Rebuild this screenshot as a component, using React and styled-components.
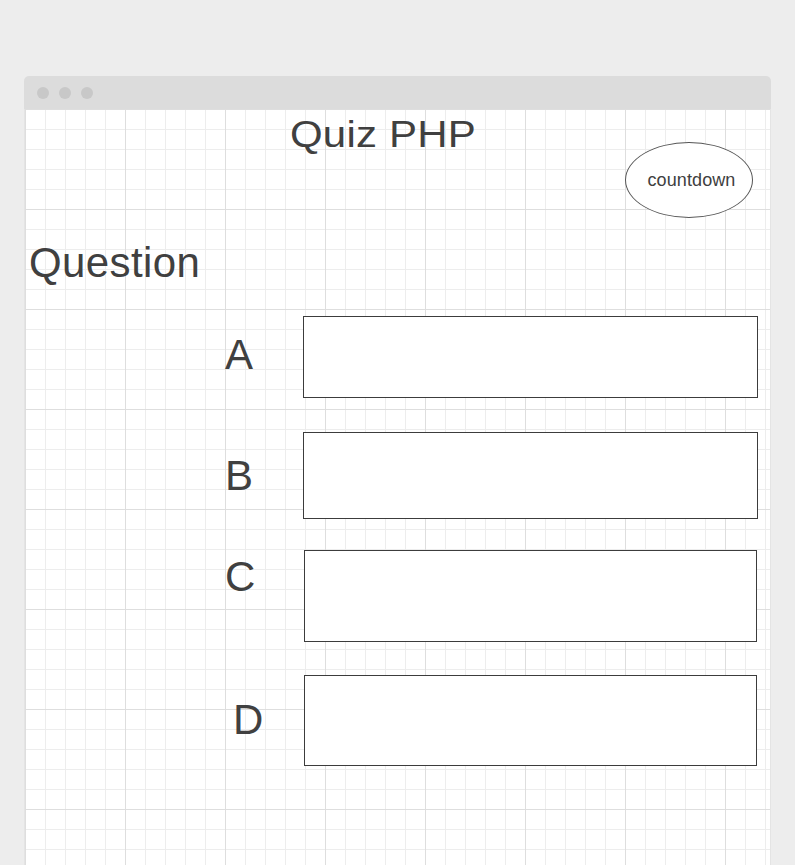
import React from 'react'
import styled, { createGlobalStyle } from 'styled-components'

const GlobalStyle = createGlobalStyle`
  html, body {
    margin: 0;
    padding: 0;
    background: #ededed;
    overflow: hidden;
    font-family: "Liberation Sans", Arial, sans-serif;
    color: #404040;
  }
`

const Window = styled.div`
  margin: 76px 0 0 24px;
  width: 747px;
`

const TitleBar = styled.div`
  height: 33px;
  background: #dcdcdc;
  border-radius: 5px 5px 0 0;
  display: flex;
  align-items: center;
  gap: 10px;
  padding-left: 13px;
`

const Dot = styled.span`
  width: 12px;
  height: 12px;
  border-radius: 50%;
  background: #c8c8c8;
`

const Canvas = styled.div`
  min-height: 760px;
  border-left: 1px solid #e4e4e4;
  border-right: 1px solid #e4e4e4;
  background-color: #fff;
  background-image:
    linear-gradient(to right, #dedede 1px, transparent 1px),
    linear-gradient(to bottom, #dedede 1px, transparent 1px),
    linear-gradient(to right, #ededed 1px, transparent 1px),
    linear-gradient(to bottom, #ededed 1px, transparent 1px);
  background-size: 100px 100px, 100px 100px, 20px 20px, 20px 20px;
`

const Header = styled.div`
  display: flex;
  align-items: flex-start;
`

const Title = styled.h1`
  margin: 6px 0 0 265px;
  font-size: 42px;
  font-weight: normal;
  letter-spacing: 0.2px;
  line-height: 1;
  transform: scaleY(0.9);
  transform-origin: top left;
  white-space: nowrap;
`

const Countdown = styled.div`
  margin: 33px 17px 0 auto;
  width: 128px;
  height: 76px;
  box-sizing: border-box;
  padding-left: 5px;
  border: 1px solid #555;
  border-radius: 50%;
  display: flex;
  align-items: center;
  justify-content: center;
  font-size: 18px;
  letter-spacing: 0.1px;
  background: #fff;
`

const Question = styled.h2`
  margin: 24px 0 0 4px;
  font-size: 42px;
  font-weight: normal;
  letter-spacing: 0.4px;
  line-height: 1;
`

const Options = styled.div`
  display: flex;
  flex-direction: column;
`

const Row = styled.div`
  display: flex;
  align-items: flex-start;
  margin-top: ${(p) => p.$top}px;
`

const Letter = styled.div`
  box-sizing: border-box;
  width: ${(p) => p.$col}px;
  padding-left: ${(p) => p.$indent}px;
  margin-top: ${(p) => p.$drop}px;
  font-size: 42px;
  line-height: 1;
`

const AnswerBox = styled.div`
  box-sizing: border-box;
  width: ${(p) => p.$w}px;
  height: ${(p) => p.$h}px;
  border: 1px solid #3c3c3c;
  background: #fff;
`

const answers = [
  { label: 'A', top: 32, col: 278, indent: 200, drop: 18, w: 455, h: 82 },
  { label: 'B', top: 34, col: 278, indent: 200, drop: 23, w: 455, h: 87 },
  { label: 'C', top: 31, col: 279, indent: 200, drop: 6, w: 453, h: 92 },
  { label: 'D', top: 33, col: 279, indent: 208, drop: 24, w: 453, h: 91 },
]

const App = () => (
  <>
    <GlobalStyle />
    <Window>
      <TitleBar>
        <Dot />
        <Dot />
        <Dot />
      </TitleBar>
      <Canvas>
        <Header>
          <Title>Quiz PHP</Title>
          <Countdown>countdown</Countdown>
        </Header>
        <Question>Question</Question>
        <Options>
          {answers.map((a) => (
            <Row key={a.label} $top={a.top}>
              <Letter $col={a.col} $indent={a.indent} $drop={a.drop}>{a.label}</Letter>
              <AnswerBox $w={a.w} $h={a.h} />
            </Row>
          ))}
        </Options>
      </Canvas>
    </Window>
  </>
)

export default App
